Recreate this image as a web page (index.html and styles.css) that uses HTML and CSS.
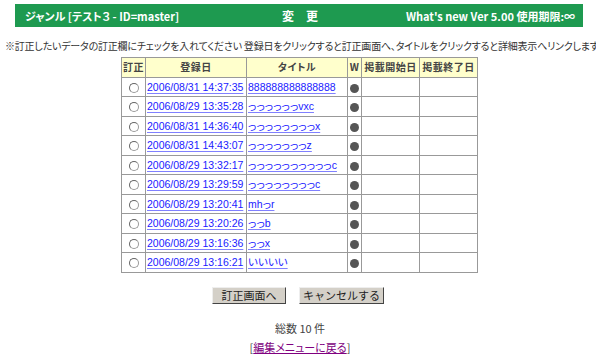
FILE: index.html
```html
<!DOCTYPE html>
<html>
  <head>
    <title>変更</title>
    <meta charset="utf-8" />
    <link rel="stylesheet" href="styles.css">
  </head>
  <body>
    <div class="header">
      <div class="header-left">ジャンル [テスト３ - ID=master]</div>
      <div class="header-center">変　更</div>
      <div class="header-right">What's new Ver 5.00 使用期限:∞</div>
    </div>

    <p class="note">※訂正したいデータの訂正欄にチェックを入れてください 登録日をクリックすると訂正画面へ、タイトルをクリックすると詳細表示へリンクします</p>

    <table class="list">
      <tr>
        <th class="col-check">訂正</th>
        <th class="col-date">登録日</th>
        <th class="col-title">タイトル</th>
        <th class="col-w">W</th>
        <th class="col-start">掲載開始日</th>
        <th class="col-end">掲載終了日</th>
      </tr>
      <tr><td class="center"><span class="radio"></span></td><td><a href="#">2006/08/31 14:37:35</a></td><td><a href="#">888888888888888</a></td><td class="center"><span class="dot"></span></td><td></td><td></td></tr>
      <tr><td class="center"><span class="radio"></span></td><td><a href="#">2006/08/29 13:35:28</a></td><td><a href="#">っっっっっっvxc</a></td><td class="center"><span class="dot"></span></td><td></td><td></td></tr>
      <tr><td class="center"><span class="radio"></span></td><td><a href="#">2006/08/31 14:36:40</a></td><td><a href="#">っっっっっっっっx</a></td><td class="center"><span class="dot"></span></td><td></td><td></td></tr>
      <tr><td class="center"><span class="radio"></span></td><td><a href="#">2006/08/31 14:43:07</a></td><td><a href="#">っっっっっっっz</a></td><td class="center"><span class="dot"></span></td><td></td><td></td></tr>
      <tr><td class="center"><span class="radio"></span></td><td><a href="#">2006/08/29 13:32:17</a></td><td><a href="#">っっっっっっっっっっc</a></td><td class="center"><span class="dot"></span></td><td></td><td></td></tr>
      <tr><td class="center"><span class="radio"></span></td><td><a href="#">2006/08/29 13:29:59</a></td><td><a href="#">っっっっっっっっc</a></td><td class="center"><span class="dot"></span></td><td></td><td></td></tr>
      <tr><td class="center"><span class="radio"></span></td><td><a href="#">2006/08/29 13:20:41</a></td><td><a href="#">mhっr</a></td><td class="center"><span class="dot"></span></td><td></td><td></td></tr>
      <tr><td class="center"><span class="radio"></span></td><td><a href="#">2006/08/29 13:20:26</a></td><td><a href="#">っっb</a></td><td class="center"><span class="dot"></span></td><td></td><td></td></tr>
      <tr><td class="center"><span class="radio"></span></td><td><a href="#">2006/08/29 13:16:36</a></td><td><a href="#">っっx</a></td><td class="center"><span class="dot"></span></td><td></td><td></td></tr>
      <tr><td class="center"><span class="radio"></span></td><td><a href="#">2006/08/29 13:16:21</a></td><td><a href="#">いいいい</a></td><td class="center"><span class="dot"></span></td><td></td><td></td></tr>
    </table>

    <div class="buttons">
      <button class="btn btn-edit">訂正画面へ</button>
      <button class="btn btn-cancel">キャンセルする</button>
    </div>

    <p class="total">総数 10 件</p>
    <p class="back">[<a href="#">編集メニューに戻る</a>]</p>
  </body>
</html>
```

FILE: styles.css
```css
body {
  margin: 4px 4px;
  font-family: "Noto Sans CJK JP", "Liberation Sans", sans-serif;
  font-size: 11px;
  color: #333;
  background-color: #fff;
  font-feature-settings: "palt";
}

.header {
  width: 568px;
  height: 23px;
  margin: 0 auto 0 11px;
  padding: 0 8px 0 10px;
  box-sizing: border-box;
  background-color: #1e9a50;
  color: #fff;
  font-weight: bold;
  font-size: 11px;
  display: grid;
  grid-template-columns: 1fr auto 1fr;
  align-items: center;
}

.header-center {
  font-size: 12px;
}

.header-right {
  text-align: right;
}

.note {
  margin: 12px 0 4px 1px;
  font-size: 10px;
  line-height: 14px;
  letter-spacing: -0.2px;
  white-space: nowrap;
  color: #333;
}

.list {
  margin: 0 0 0 117px;
  border-collapse: collapse;
  table-layout: fixed;
  width: 357px;
}

.list th,
.list td {
  box-sizing: border-box;
  border: 1px solid #999;
  height: 19.5px;
  padding: 0 1px;
  font-size: 10px;
  line-height: 12px;
  white-space: nowrap;
  overflow: hidden;
}

.list th {
  background-color: #ffffcc;
  color: #444;
  font-weight: bold;
  letter-spacing: 0.5px;
}

.list td.center {
  text-align: center;
}

.col-check { width: 24px; }
.col-date { width: 101px; }
.col-title { width: 101px; }
.col-w { width: 14px; }
.col-start { width: 58px; }
.col-end { width: 58px; }

.list th.col-w,
.list th.col-check {
  padding: 0;
}

.list a {
  color: #1a1aff;
  font-family: "Liberation Sans", "Noto Sans CJK JP", sans-serif;
  font-size: 10.5px;
  text-decoration-color: #8080ff;
  text-underline-offset: 2px;
}

.radio {
  display: inline-block;
  width: 8px;
  height: 8px;
  border: 1px solid #999;
  border-top-color: #666;
  border-left-color: #666;
  border-radius: 50%;
  background-color: #fff;
  vertical-align: middle;
}

.dot {
  display: inline-block;
  width: 9px;
  height: 9px;
  border-radius: 50%;
  background-color: #555;
  vertical-align: middle;
}

.buttons {
  display: flex;
  justify-content: center;
  gap: 13px;
  margin-top: 14px;
  padding-right: 4px;
}

.btn {
  font-family: "Noto Sans CJK JP", sans-serif;
  font-size: 11px;
  line-height: 13px;
  height: 17px;
  padding: 0;
  background-color: #d4d0c8;
  color: #222;
  border: 1px solid;
  border-color: #eee #444 #444 #eee;
}

.btn-edit { width: 74px; }
.btn-cancel { width: 85px; }

.total {
  text-align: center;
  margin: 16px 0 0 0;
  color: #444;
}

.back {
  text-align: center;
  margin: 3px 0 0 0;
  color: #444;
}

.back a {
  color: #800080;
}
```
